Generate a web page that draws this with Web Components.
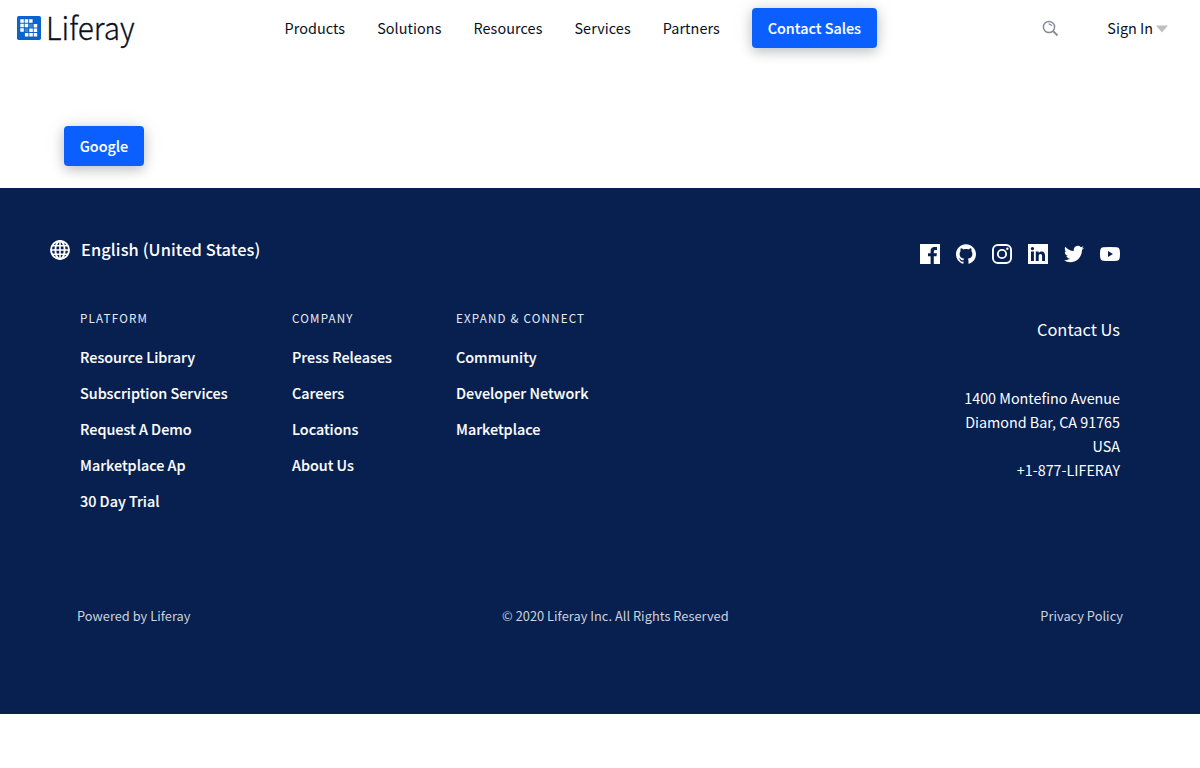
<!DOCTYPE html>
<html lang="en">
<head>
<meta charset="utf-8">
<title>Liferay</title>
<style>
html,body{margin:0;background:#fff}
body{font:400 14px/24px "Noto Sans CJK JP","Noto Sans CJK SC","Noto Sans",sans-serif;color:#09101d;-webkit-font-smoothing:antialiased}
</style>
</head>
<body>
<lr-page></lr-page>
<script>
const define = (name, css, html) => customElements.define(name, class extends HTMLElement {
  constructor() {
    super();
    const t = document.createElement('template');
    t.innerHTML = `<style>*{box-sizing:border-box}${css}</style>${html}`;
    this.attachShadow({ mode: 'open' }).append(t.content.cloneNode(true));
  }
});

define('lr-button', `
:host{display:block}
a{display:flex;align-items:center;justify-content:center;width:var(--w);height:40px;border-radius:4px;background:#0b5fff;color:#fff;font-size:14.4px;line-height:24px;font-weight:500;white-space:nowrap;box-shadow:0 4px 12px rgba(9,16,29,.2),0 0 20px rgba(9,16,29,.1);-webkit-text-stroke:.1px #fff}
`, `<a><slot></slot></a>`);

define('lr-logo', `
:host{display:flex;width:118px;height:40px;gap:4.500px;padding-top:8px}
svg{display:block;flex:none}
span{display:block;font-weight:300;font-size:32px;line-height:24px;margin-top:-2px;color:#09101d;-webkit-text-stroke:.3px #09101d;transform:scaleX(.93);transform-origin:0 50%;white-space:nowrap}
`, `<svg width="24" height="24" viewBox="0 0 24 24"><rect width="24" height="24" rx="1.8" fill="#0b63ce"/><g fill="#fff">
<path d="M3.300 3.200h3.500v3.500H3.300zM7.700 3.200h3.500v3.500H7.700zM12.100 3.200h3.500v3.500h-3.500zM3.300 7.700h3.500v3.500H3.300zM7.700 7.700h3.500v3.500H7.700zM16.700 8h3.500v3.500h-3.500zM3.300 12.200h3.500v3.500H3.300zM12.300 12.400h3.500v3.500h-3.500zM16.700 12.400h3.500v3.500h-3.500zM7.900 16.900h3.500v3.500H7.900zM12.300 16.900h3.500v3.500h-3.500zM16.700 16.900h3.500v3.500h-3.500z"/><path opacity=".22" d="M12.200 7.900h3.500v3.500h-3.500zM7.800 12.400h3.500v3.500H7.800z"/></g></svg><span>Liferay</span>`);

define('lr-header', `
:host{display:flex;height:56px;padding:8px 32px 0 17px}
nav{display:flex;gap:32px;margin-left:149.500px;line-height:40px;font-size:14.400px;letter-spacing:.07px}
nav lr-button{letter-spacing:0}
.search{margin:12px 0 0 165px;display:block}
.sign{margin-left:auto;line-height:40px;font-size:14.400px;display:flex;align-items:center;gap:3px;height:40px}
.sign svg{margin-top:2px}
`, `<lr-logo></lr-logo>
<nav><span>Products</span><span>Solutions</span><span>Resources</span><span>Services</span><span>Partners</span><lr-button style="--w:125px">Contact Sales</lr-button></nav>
<svg class="search" width="17" height="17" viewBox="0 0 17 17" fill="none" stroke="#858b98" stroke-width="1.500"><circle cx="7" cy="7" r="5.600"/><path d="M11 11l4.500 4.500" stroke-width="1.800"/><path d="M6.500 3.800Q9 3.800 9.800 6" stroke-width="1.200"/></svg>
<div class="sign"><span>Sign In</span><svg width="12" height="8" viewBox="0 0 12 8"><path d="M0 .5h12L6 7.500z" fill="#bfbfbf"/></svg></div>`);

define('lr-social', `
:host{display:flex;gap:16px}
svg{width:20px;height:20px;fill:#fff;display:block}
`, `
<svg viewBox="0 0 20 20"><path fill-rule="evenodd" d="M0 0h20v20h-6.200v-7.700h2.700l.4-3.100h-3.100V7.400c0-.9.3-1.500 1.600-1.500H17V3.100C16.700 3 15.700 3 14.600 3c-2.400 0-4 1.400-4 4.100v2.100H8v3.100h2.600V20H0z"/></svg>
<svg viewBox="0 0 24 24"><path d="M12 .297c-6.630 0-12 5.373-12 12 0 5.303 3.438 9.800 8.205 11.385.6.113.82-.258.82-.577 0-.285-.010-1.040-.015-2.040-3.338.724-4.042-1.610-4.042-1.610C4.422 18.070 3.633 17.700 3.633 17.700c-1.087-.744.084-.729.084-.729 1.205.084 1.838 1.236 1.838 1.236 1.070 1.835 2.809 1.305 3.495.998.108-.776.417-1.305.76-1.605-2.665-.3-5.466-1.332-5.466-5.930 0-1.310.465-2.380 1.235-3.220-.135-.303-.54-1.523.105-3.176 0 0 1.005-.322 3.300 1.230.96-.267 1.980-.399 3-.405 1.020.006 2.040.138 3 .405 2.280-1.552 3.285-1.230 3.285-1.230.645 1.653.24 2.873.12 3.176.765.84 1.230 1.910 1.230 3.220 0 4.610-2.805 5.625-5.475 5.920.42.36.81 1.096.81 2.220 0 1.606-.015 2.896-.015 3.286 0 .315.210.69.825.57C20.565 22.092 24 17.592 24 12.297c0-6.627-5.373-12-12-12"/></svg>
<svg viewBox="0 0 20 20"><g fill="none" stroke="#fff" stroke-width="1.900"><rect x=".95" y=".95" width="18.100" height="18.100" rx="5"/><circle cx="10" cy="10" r="4.150"/></g><circle cx="15.300" cy="4.700" r="1.250"/></svg>
<svg viewBox="0 0 20 20"><path fill-rule="evenodd" d="M0 0h20v20H0zM3 7.600V17h2.900V7.600zM4.450 2.900a1.700 1.700 0 1 0 0 3.400a1.700 1.700 0 0 0 0-3.400zM7.800 7.600V17h2.900v-4.700c0-1.300.5-2.200 1.800-2.200 1.200 0 1.600.9 1.600 2.200V17H17v-5.200c0-2.800-1-4.400-3.300-4.400-1.400 0-2.400.7-3 1.600V7.600z"/></svg>
<svg viewBox="0 0 24 24"><path d="M23.953 4.570a10 10 0 0 1-2.825.775 4.958 4.958 0 0 0 2.163-2.723c-.951.555-2.005.959-3.127 1.184a4.920 4.920 0 0 0-8.384 4.482C7.690 8.095 4.067 6.130 1.640 3.162a4.822 4.822 0 0 0-.666 2.475c0 1.710.870 3.213 2.188 4.096a4.904 4.904 0 0 1-2.228-.616v.060a4.923 4.923 0 0 0 3.946 4.827 4.996 4.996 0 0 1-2.212.085 4.936 4.936 0 0 0 4.604 3.417 9.867 9.867 0 0 1-6.102 2.105c-.390 0-.779-.023-1.170-.067a13.995 13.995 0 0 0 7.557 2.209c9.053 0 13.998-7.496 13.998-13.985 0-.210 0-.420-.015-.630A9.935 9.935 0 0 0 24 4.590z"/></svg>
<svg viewBox="0 0 20 20"><path fill-rule="evenodd" d="M3 3.300Q10 2.700 17 3.300Q19.500 3.500 19.700 6Q20.300 10 19.700 14Q19.500 16.500 17 16.700Q10 17.300 3 16.700Q.5 16.500.3 14Q-.3 10 .3 6Q.5 3.500 3 3.300zM8 7.100v5.800l5-2.900z"/></svg>`);

define('lr-language', `
:host{display:flex;align-items:center;gap:11px;color:#fff;font-size:16.400px;letter-spacing:.1px;font-weight:500;height:24px}
span{margin-top:-2px}
`, `<svg width="20" height="20" viewBox="0 0 20 20" fill="none" stroke="#fff" stroke-width="1.900"><circle cx="10" cy="10" r="9"/><ellipse cx="10" cy="10" rx="4.600" ry="9"/><path d="M10 1v18M1 10h18M2.500 5.800h15M2.500 14.200h15" stroke-width="1.600"/></svg><span><slot></slot></span>`);

define('lr-links', `
:host{display:block;color:#fff;white-space:nowrap;width:var(--w)}
h3{margin:-4px 0 9px;font-weight:400;font-size:11.600px;line-height:24px;letter-spacing:1.200px;text-transform:uppercase;color:#e7eaef}
div{display:flex;flex-direction:column;font-weight:500;font-size:14.360px;-webkit-text-stroke:.1px #fff}
::slotted(a){line-height:36px}
`, `<h3><slot name="title"></slot></h3><div><slot></slot></div>`);

define('lr-footer', `
:host{display:block;background:#072050;height:526px;padding:50px 80px 0;color:#fff}
.top{display:flex;justify-content:space-between;margin-left:-30px;height:72px}
lr-social{margin-top:6px}
.main{display:flex;height:294px}
.contact{margin-left:auto;text-align:right;padding-top:7px;font-size:14.330px}
h2{font-size:16.450px;line-height:24px;font-weight:400;margin:0 0 45px}
.legal{display:flex;justify-content:space-between;margin:0 -3px;font-size:12.800px;letter-spacing:.03px;color:#ced2dc}
`, `<div class="top"><lr-language>English (United States)</lr-language><lr-social></lr-social></div>
<div class="main">
<lr-links style="--w:212px"><span slot="title">Platform</span><a>Resource Library</a><a>Subscription Services</a><a>Request A Demo</a><a>Marketplace Ap</a><a>30 Day Trial</a></lr-links>
<lr-links style="--w:164px"><span slot="title">Company</span><a>Press Releases</a><a>Careers</a><a>Locations</a><a>About Us</a></lr-links>
<lr-links style="--w:164px"><span slot="title">Expand &amp; Connect</span><a>Community</a><a>Developer Network</a><a>Marketplace</a></lr-links>
<div class="contact"><h2>Contact Us</h2>1400 Montefino Avenue<br>Diamond Bar, CA 91765<br>USA<br>+1-877-LIFERAY</div>
</div>
<div class="legal"><span>Powered by Liferay</span><span>© 2020 Liferay Inc. All Rights Reserved</span><span>Privacy Policy</span></div>`);

define('lr-page', `
:host{display:block}
main{height:132px;padding:70px 64px 0}
`, `<lr-header></lr-header><main><lr-button style="--w:80px">Google</lr-button></main><lr-footer></lr-footer>`);
</script>
</body>
</html>
